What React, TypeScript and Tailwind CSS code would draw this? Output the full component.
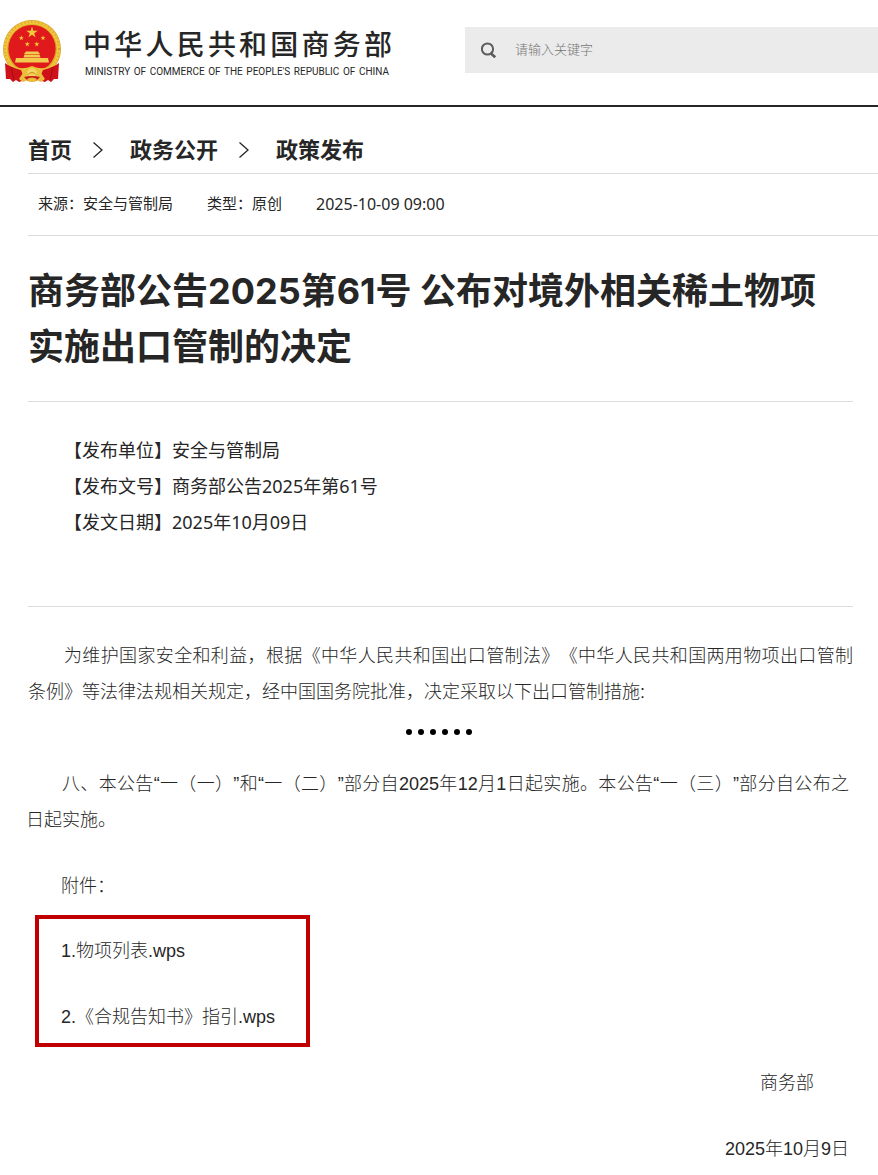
import React, { useState } from 'react';

const breadcrumbs = ['首页', '政务公开', '政策发布'];

const info = [
  { label: '发布单位', value: '安全与管制局' },
  { label: '发布文号', value: '商务部公告2025年第61号' },
  { label: '发文日期', value: '2025年10月09日' },
];

const attachments = ['1.物项列表.wps', '2.《合规告知书》指引.wps'];

const STAR = 'M0 -1 L0.225 -0.309 L0.951 -0.309 L0.363 0.118 L0.588 0.809 L0 0.382 L-0.588 0.809 L-0.363 0.118 L-0.951 -0.309 L-0.225 -0.309 Z';

function Emblem() {
  return (
    <svg viewBox="0 0 60 64" className="w-[60px] h-16 shrink-0" role="img" aria-label="国徽">
      {/* wheat ring */}
      <circle cx="30" cy="30" r="29" fill="#d9a226" />
      <circle cx="30" cy="30" r="26.5" fill="none" stroke="#f0c63c" strokeWidth="3.6" />
      <circle cx="30" cy="30" r="27" fill="none" stroke="#dba62a" strokeWidth="2" strokeDasharray="1 2.5" />
      <circle cx="30" cy="29.5" r="23.6" fill="#e01a1c" />
      <g fill="#f2cb3c">
        <path d={STAR} transform="translate(30 13.5) scale(6)" />
        <path d={STAR} transform="translate(19.3 19) scale(2.7)" />
        <path d={STAR} transform="translate(41 19) scale(2.7)" />
        <path d={STAR} transform="translate(25.3 25.2) scale(2.7)" />
        <path d={STAR} transform="translate(34.8 25.2) scale(2.7)" />
      </g>
      {/* gate tower */}
      <g fill="#f0cb4c">
        <path d="M24 32.5 H36 L38 35 H22 Z" />
        <path d="M22.5 35.5 H37.5 L38.5 38.5 H21.5 Z" />
        <path d="M14 39 H46 L47 43.5 H13 Z" />
      </g>
      {/* lower wheat stalks */}
      <path d="M6 43 Q16 53 30 47 Q44 53 54 43 L52 50 Q42 57 30 52 Q18 57 8 50 Z" fill="#ecc038" />
      {/* red drapery */}
      <path d="M3 44 Q8 48 19 51 L23 61 L17 63 L14 61 L11 63 L8 60 L4 60 Z" fill="#cf1119" />
      <path d="M57 44 Q52 48 41 51 L37 61 L43 63 L46 61 L49 63 L52 60 L56 60 Z" fill="#cf1119" />
      <path d="M9 48 L12 61 M51 48 L48 61" stroke="#9f0d12" strokeWidth="1" fill="none" />
      {/* gear */}
      <path d="M17 60 Q23 49 30 49 Q37 49 43 60 L39 63 Q30 58 21 63 Z" fill="#eabd3d" />
      <circle cx="30" cy="54" r="5" fill="#f4d45c" />
      <path d="M25.5 56 Q30 51 34.5 56" fill="none" stroke="#c98c20" strokeWidth="1" />
      <path d="M22 58 L26 62 H34 L38 58 Q30 56 22 58 Z" fill="#c8171a" />
      <path d="M25 60 Q30 57 35 60 L33 63 H27 Z" fill="#eabd3d" />
    </svg>
  );
}

function Header() {
  const [keyword, setKeyword] = useState('');

  return (
    <header className="flex items-start justify-between border-b-2 border-[#262626] h-[107px]">
      <a href="#" className="flex items-start gap-[21px] pl-0.5 pt-[19px]">
        <Emblem />
        <div className="w-[309px] pt-1 text-[#262626]">
          <div className="text-[28px] leading-[42px] font-medium [text-align-last:justify]">中华人民共和国商务部</div>
          <div className="pl-0.5 pr-[3px] pt-px text-[10px] leading-3 [text-align-last:justify] font-['Roboto',sans-serif]">
            MINISTRY OF COMMERCE OF THE PEOPLE'S REPUBLIC OF CHINA
          </div>
        </div>
      </a>
      <form
        className="mt-[27px] flex h-[46px] w-[413px] items-center bg-[#ebebeb] pl-4"
        onSubmit={(e) => e.preventDefault()}
      >
        <button type="submit" aria-label="搜索">
          <svg viewBox="0 0 16 16" className="w-4 h-4" fill="none" stroke="#5c5c5c" strokeWidth="2">
            <circle cx="6.5" cy="7" r="5.6" />
            <path d="M10 10.5 L11 13 L14 15.5 M11 12 L14.5 15" />
          </svg>
        </button>
        <input
          type="text"
          aria-label="请输入关键字"
          placeholder="请输入关键字"
          value={keyword}
          onChange={(e) => setKeyword(e.target.value)}
          className="ml-[18px] flex-1 min-w-0 bg-transparent text-[13px] font-light text-[#262626] outline-none placeholder:text-[#757575]"
        />
      </form>
    </header>
  );
}

export default function App() {
  return (
    <div className="bg-white text-[#262626] font-['Noto_Sans','Noto_Sans_CJK_SC',sans-serif] [text-spacing-trim:space-all]">
      <Header />

      <main className="pl-7 pb-2">
        {/* Breadcrumb */}
        <nav className="flex items-center h-[67px] pt-[18px] border-b border-[#dcdcdc] text-[22px] font-bold">
          {breadcrumbs.map((item, i) => (
            <React.Fragment key={item}>
              {i > 0 && (
                <svg viewBox="0 0 10 18" className="w-2.5 h-[18px] ml-[21px] mr-[27px]" fill="none" stroke="#262626" strokeWidth="1.3">
                  <path d="M0.5 2.5 L9 10 L0.5 17.5" />
                </svg>
              )}
              <a href="#">{item}</a>
            </React.Fragment>
          ))}
        </nav>

        {/* Source line */}
        <div className="flex items-center gap-[34px] h-[62px] pl-2.5 pb-0.5 border-b border-[#dcdcdc] text-[15px]">
          <span>来源：安全与管制局</span>
          <span>类型：原创</span>
          <time className="text-base">2025-10-09 09:00</time>
        </div>

        <article className="pr-[25px]">
          <h1 className="pt-[27px] pb-[26px] pr-6 border-b border-[#dcdcdc] text-4xl leading-[56px] font-bold font-['Inter','Noto_Sans_CJK_SC',sans-serif]">
            商务部公告2025第61号 公布对境外相关稀土物项实施出口管制的决定
          </h1>

          <div className="pt-[30px] pb-[66px] pl-9 border-b border-[#dcdcdc] text-lg leading-9">
            {info.map((row) => (
              <p key={row.label}>
                【{row.label}】{row.value}
              </p>
            ))}
          </div>

          <div className="pt-[31px] text-lg leading-9 font-light font-['Liberation_Sans','Noto_Sans_CJK_SC',sans-serif]">
            <p className="indent-[36px] text-justify">
              为维护国家安全和利益，根据《中华人民共和国出口管制法》《中华人民共和国两用物项出口管制条例》等法律法规相关规定，经中国国务院批准，决定采取以下出口管制措施:
            </p>

            <div className="flex justify-center gap-[6px] h-14 pt-[19px] pr-1" aria-hidden="true">
              {[0, 1, 2, 3, 4, 5].map((n) => (
                <span key={n} className="w-1.5 h-1.5 rounded-full bg-black" />
              ))}
            </div>

            <div className="-ml-0.5 mr-1">
              <p className="indent-[36px] text-justify">
                八、本公告“一（一）”和“一（二）”部分自2025年12月1日起实施。本公告“一（三）”部分自公布之日起实施。
              </p>
              <p className="pt-[30px] pl-[35px]">附件：</p>
            </div>

            <ul className="ml-[7px] mt-[11px] flex w-[275px] flex-col gap-[30px] border-4 border-[#c00000] pt-[14px] pb-2 pl-[22px]">
              {attachments.map((name) => (
                <li key={name}>
                  <a href="#">{name}</a>
                </li>
              ))}
            </ul>

            <div className="pt-[18px] text-right">
              <p className="pr-[39px]">商务部</p>
              <p className="pt-[30px] pr-1">2025年10月9日</p>
            </div>
          </div>
        </article>
      </main>
    </div>
  );
}
